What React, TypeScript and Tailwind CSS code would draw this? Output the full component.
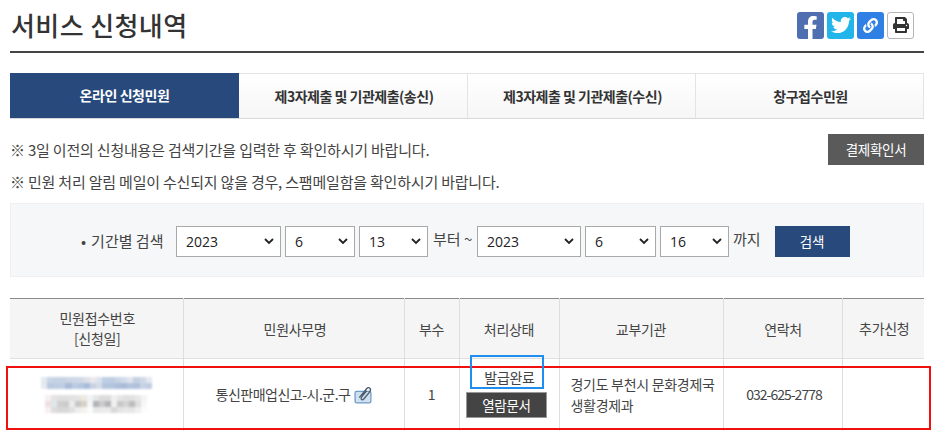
import React from 'react';
import { FaFacebookF, FaTwitter, FaLink, FaPrint } from 'react-icons/fa';

const font = { fontFamily: '"Noto Sans CJK KR", "Noto Sans", sans-serif' };

const Tab = ({ label, active, w }: { label: string; active?: boolean; w: string }) => (
  <div
    className={
      active
        ? `${w} flex items-center justify-center bg-[#28497b] text-white text-[14px] font-bold tracking-[-0.4px]`
        : `${w} flex items-center justify-center border-t border-r border-[#e4e4e4] bg-gradient-to-b from-white to-[#f6f6f6] pl-[2px] text-[#333] text-[14px] font-bold tracking-[-0.5px]`
    }
  >
    {label}
  </div>
);

const Sel = ({ value, w }: { value: string; w: string }) => (
  <div className={`${w} h-[31px] border border-[#a9a9a9] bg-white flex items-center justify-between pl-[9px] pr-[4px] text-[14px] text-[#222]`}>
    <span style={{ fontFamily: '"Open Sans", sans-serif' }}>{value}</span>
    <svg width="12" height="8" viewBox="0 0 12 8" className="mr-[1px]">
      <path d="M2 2 L6 6 L10 2" fill="none" stroke="#222" strokeWidth="1.8" />
    </svg>
  </div>
);

// blurred-out application number and date
const mosaicTop = [
  ['#e4e8ef', '#c9d5e6', '#c6d3e6', '#c5d2e4', '#cbd6e6', '#ccd7e7', '#d0d9e8', '#dde0e8', '#ece8ec', '#dbe3ee', '#bfcee3', '#bfcde3', '#c9d5e6', '#d3dcea', '#dfe4ee', '#c6d0e2', '#d0d9e8', '#e4e8f0'],
  ['#e6e9ef', '#b8c9e0', '#bccce1', '#c0cee2', '#a9bbd8', '#bccbe1', '#b5c6df', '#a9bcd9', '#c8d2e4', '#d6dbe8', '#b3c5df', '#b4c5de', '#aebfdb', '#a8bbd8', '#b3c4de', '#b0c1dc', '#c7d3e5', '#c0cde1'],
];
const mosaicBottom = [
  ['#f8f0f0', '#e4e4e4', '#e0e0e0', '#e0e0e0', '#e2e2e2', '#e6e4e2', '#eee8e0', '#f0f4f8', '#e6e6e6', '#dcdcdc', '#dcdcdc', '#f0f0f0', '#e6e6e6', '#e0e0e0', '#e2e2e2', '#e8e8e8', '#f4f4f4'],
  ['#ece0e2', '#e0e8ea', '#cfcfcf', '#cbcbcb', '#ececec', '#c4c6c8', '#d8d0c6', '#f4f6f8', '#b2b3b8', '#cbcbcb', '#b4b4b8', '#f0f0f0', '#c8c8c8', '#d4d4d4', '#bcbcbc', '#e0dee0', '#f8f8f8'],
  ['#f8eef0', '#dcdedc', '#d8d8d8', '#d8d8d8', '#e0e0e0', '#eeeeee', '#f4f2ee', '#fafbfc', '#e8e8e8', '#eaeaea', '#ececec', '#d8d8d8', '#e4e4e4', '#e8e8e8', '#e6e6e6', '#f0f0f0', '#fcfcfc'],
];

const Mosaic = ({ rows, cell }: { rows: string[][]; cell: string }) => (
  <div className="flex flex-col items-center">
    {rows.map((row, r) => (
      <div key={r} className="flex">
        {row.map((c, i) => (
          <div key={i} className={cell} style={{ backgroundColor: c }} />
        ))}
      </div>
    ))}
  </div>
);

const th = 'border-r border-[#dedede] font-normal text-[14px] text-[#444] tracking-[-0.3px] leading-[20px]';
const td = 'border-r border-[#dedede] text-[14px] text-[#444] tracking-[-0.3px] text-center';

export default function App() {
  return (
    <div className="relative w-[936px] h-[443px] overflow-hidden bg-white pl-[10px] pr-[12px]" style={font}>
      {/* title */}
      <div className="flex h-[53px] items-center justify-between border-b-2 border-[#444] pb-[3px]">
        <h1 className="text-[26px] font-medium text-[#333] tracking-[0.4px] pl-[1px]">서비스 신청내역</h1>
        <div className="flex gap-[3px] pr-[10px] pt-[2px]">
          <div className="w-[27px] h-[27px] rounded-[3px] bg-[#4f6fb0] flex items-end justify-center text-white">
            <FaFacebookF size={23} />
          </div>
          <div className="w-[27px] h-[27px] rounded-[3px] bg-[#22b5ea] flex items-center justify-center text-white">
            <FaTwitter size={20} />
          </div>
          <div className="w-[27px] h-[27px] rounded-[3px] bg-[#2f80e4] flex items-center justify-center text-white">
            <FaLink size={15} />
          </div>
          <div className="w-[27px] h-[27px] rounded-[3px] border border-[#b5b5b5] bg-white flex items-center justify-center text-[#333]">
            <FaPrint size={16} />
          </div>
        </div>
      </div>

      {/* tabs */}
      <div className="mt-[20px] flex h-[46px] border-b border-[#d8d8d8]">
        <Tab label="온라인 신청민원" active w="w-[229px]" />
        <Tab label="제3자제출 및 기관제출(송신)" w="w-[229px]" />
        <Tab label="제3자제출 및 기관제출(수신)" w="w-[228px]" />
        <Tab label="창구접수민원" w="w-[228px]" />
      </div>

      {/* notes */}
      <div className="mt-[15px] flex items-start justify-between">
        <div className="text-[15px] text-[#444] tracking-[-0.2px]">
          <p className="h-[32px] pt-[5px] leading-[22px]">※ 3일 이전의 신청내용은 검색기간을 입력한 후 확인하시기 바랍니다.</p>
          <p className="h-[32px] pt-[5px] leading-[22px]">※ 민원 처리 알림 메일이 수신되지 않을 경우, 스팸메일함을 확인하시기 바랍니다.</p>
        </div>
        <button className="w-[96px] h-[31px] bg-[#5a5a5a] text-white text-[13.5px] tracking-[-0.3px]">결제확인서</button>
      </div>

      {/* search */}
      <div className="mt-[5px] flex h-[74px] items-center border border-[#eeeeee] bg-[#f6f7f9] pl-[70px] pt-[2px] text-[15px] text-[#444]">
        <span className="w-[95px] whitespace-nowrap"><span className="mr-[5px]">•</span>기간별 검색</span>
        <div className="flex items-center gap-[4px]">
          <Sel value="2023" w="w-[105px]" />
          <Sel value="6" w="w-[70px]" />
          <Sel value="13" w="w-[69px]" />
        </div>
        <span className="w-[49px] pl-[5px] whitespace-nowrap -mt-[3px]">부터 ~</span>
        <div className="flex items-center gap-[4px]">
          <Sel value="2023" w="w-[104px]" />
          <Sel value="6" w="w-[71px]" />
          <Sel value="16" w="w-[69px]" />
        </div>
        <span className="ml-[4px] -mt-[3px]">까지</span>
        <button className="ml-[14px] w-[75px] h-[31px] bg-[#28497b] text-white text-[13.5px]">검색</button>
      </div>

      {/* table */}
      <table className="mt-[21px] w-[914px] table-fixed border-collapse border-t border-[#8a8a8a]">
        <colgroup>
          <col className="w-[173px]" />
          <col className="w-[221px]" />
          <col className="w-[55px]" />
          <col className="w-[100px]" />
          <col className="w-[164px]" />
          <col className="w-[119px]" />
          <col className="w-[82px]" />
        </colgroup>
        <thead>
          <tr className="h-[60px] bg-[#f5f5f5] border-b border-[#e0e0e0]">
            <th className={th}><div className="-mt-[2px] pl-[2px]">민원접수번호<br />[신청일]</div></th>
            <th className={th}><div className="pl-[3px]">민원사무명</div></th>
            <th className={th}>부수</th>
            <th className={th}>처리상태</th>
            <th className={th}>교부기관</th>
            <th className={th}><div className="pl-[1px]">연락처</div></th>
            <th className="font-normal text-[14px] text-[#444] tracking-[-0.3px]"><div className="pl-[2px]">추가신청</div></th>
          </tr>
        </thead>
        <tbody>
          <tr className="h-[72px]">
            <td className={td}>
              <div className="flex flex-col gap-[6px] blur-[1px] pt-[1px]">
                <Mosaic rows={mosaicTop} cell="w-[6.2px] h-[6px]" />
                <Mosaic rows={mosaicBottom} cell="w-[6px] h-[6px]" />
              </div>
            </td>
            <td className={td}>
              <span className="inline-flex items-center gap-[4px] pl-[2px] tracking-[-0.5px]">
                통신판매업신고-시.군.구
                <svg width="19" height="19" viewBox="0 0 18 18">
                  <rect x="1" y="6" width="15" height="11" rx="1.5" fill="#cfe0f0" stroke="#6f9cc4" strokeWidth="1.2" />
                  <path d="M5 12 L11.5 4 Q13.5 1.5 15 3 Q16.5 4.5 14.5 7 L9.5 13 Q8 14.5 7 13.5 Q6.2 12.5 7.5 11 L12 5.5" fill="none" stroke="#4d5f70" strokeWidth="1.3" />
                </svg>
              </span>
            </td>
            <td className={td}>1</td>
            <td className={td}>
              <div className="flex flex-col items-center gap-[5px] pb-[5px]">
                <span className="pl-[1px] leading-[20px]">발급완료</span>
                <span className="w-[81px] h-[26px] -ml-[5px] flex items-center justify-center bg-[#444] border border-[#999] text-white text-[13.5px]">열람문서</span>
              </div>
            </td>
            <td className={`${td} text-left pl-[11px] leading-[21px]`}>경기도 부천시 문화경제국<br />생활경제과</td>
            <td className={`${td} text-[#333] tracking-[-1px]`}><span className="pl-[3px]">032-625-2778</span></td>
            <td />
          </tr>
        </tbody>
      </table>

      {/* annotations drawn over the screenshot */}
      <div className="absolute left-[6px] top-[366px] w-[925px] h-[64px] border-2 border-[#f01010]" />
      <div className="absolute left-[470px] top-[355px] w-[74px] h-[34px] border-2 border-[#1f8fef]" />
    </div>
  );
}
